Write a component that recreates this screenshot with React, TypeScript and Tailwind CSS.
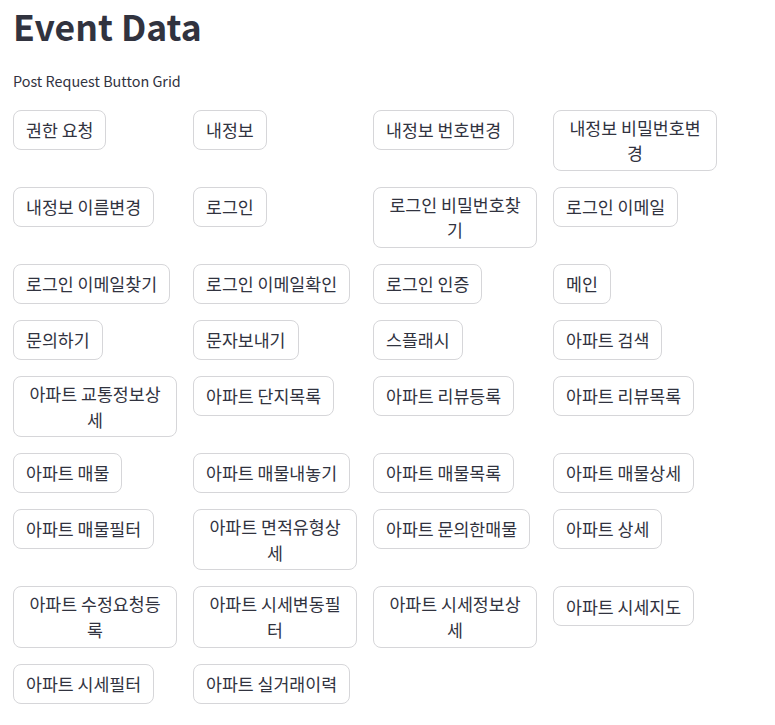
const labels = [
  '권한 요청',
  '내정보',
  '내정보 번호변경',
  '내정보 비밀번호변경',
  '내정보 이름변경',
  '로그인',
  '로그인 비밀번호찾기',
  '로그인 이메일',
  '로그인 이메일찾기',
  '로그인 이메일확인',
  '로그인 인증',
  '메인',
  '문의하기',
  '문자보내기',
  '스플래시',
  '아파트 검색',
  '아파트 교통정보상세',
  '아파트 단지목록',
  '아파트 리뷰등록',
  '아파트 리뷰목록',
  '아파트 매물',
  '아파트 매물내놓기',
  '아파트 매물목록',
  '아파트 매물상세',
  '아파트 매물필터',
  '아파트 면적유형상세',
  '아파트 문의한매물',
  '아파트 상세',
  '아파트 수정요청등록',
  '아파트 시세변동필터',
  '아파트 시세정보상세',
  '아파트 시세지도',
  '아파트 시세필터',
  '아파트 실거래이력',
];

export default function App() {
  return (
    <div
      className="min-h-screen bg-white pl-[13px] text-[#31333f]"
      style={{ fontFamily: '"Noto Sans CJK KR", "Noto Sans", sans-serif' }}
    >
      <h1 className="pt-[4px] text-[35.5px] font-bold leading-[44px]">Event Data</h1>
      <p className="mt-[20px] text-[14.4px] leading-[25.6px]">Post Request Button Grid</p>

      {/* 4 columns of 164px, buttons shrink to their text */}
      <div className="mt-4 grid w-[704px] grid-cols-4 items-start justify-items-start gap-x-4 gap-y-4 pb-4">
        {labels.map((label) => (
          <button
            key={label}
            className="min-h-10 max-w-[164px] rounded-lg border border-[#d6d6d9] bg-white px-3 py-1 text-center text-[17.3px] leading-[25.6px] text-[#31333f]"
          >
            {label}
          </button>
        ))}
      </div>
    </div>
  );
}
